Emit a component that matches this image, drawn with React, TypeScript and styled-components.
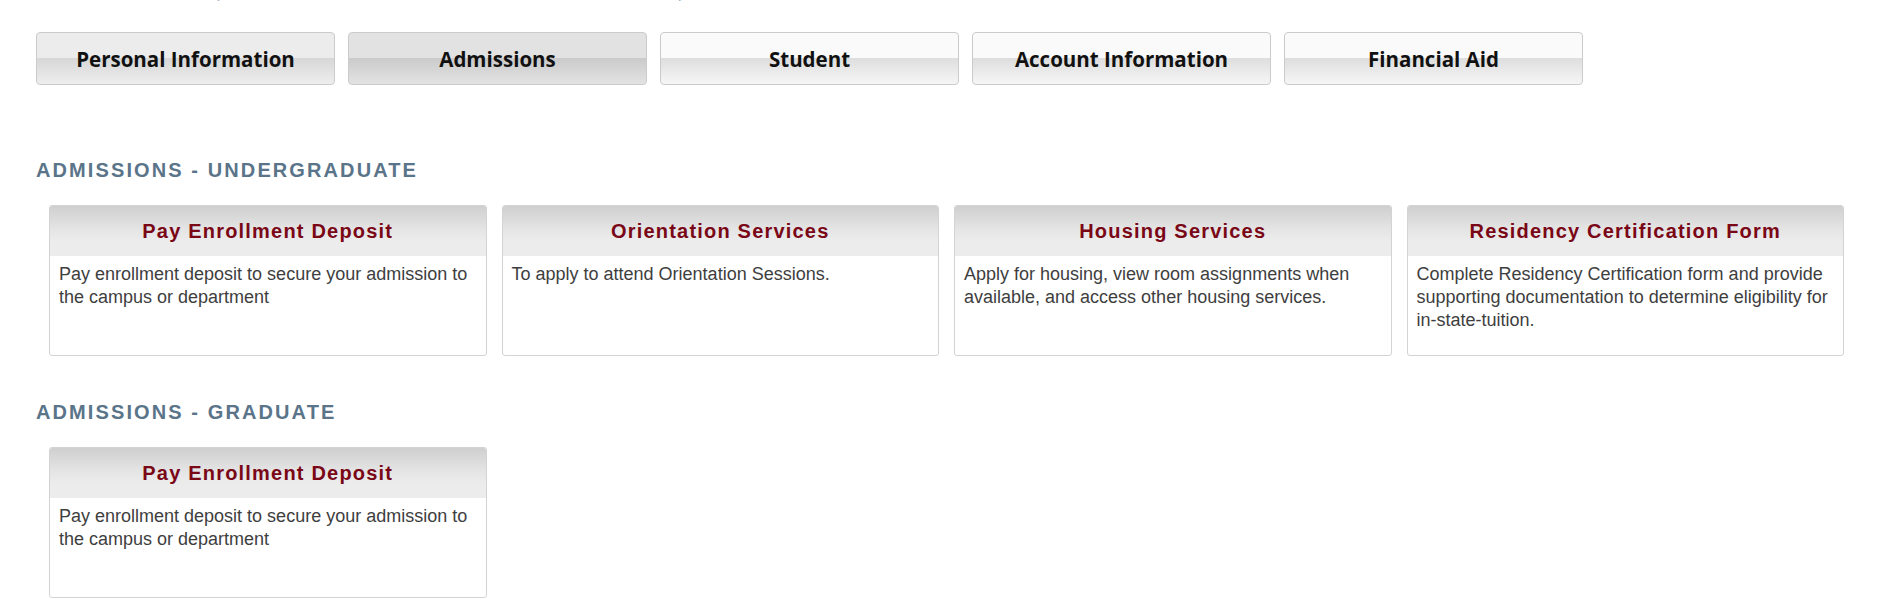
import styled, { createGlobalStyle } from "styled-components";

const GlobalStyle = createGlobalStyle`
    html, body {
        margin: 0;
        padding: 0;
        background: #fff;
    }
    body {
        font-family: "Liberation Sans", Arial, sans-serif;
        color: #333;
    }
`;

const Page = styled.div`
    padding: 0 40px 0 36px;
`;

// descenders of the page title that sits just above the visible area
const TitleTail = styled.div`
    height: 5px;
    overflow: hidden;
    display: flex;
    gap: 454px;
    padding-left: 181px;
    color: #4f729a;
    font-size: 26px;
    line-height: 5px;
`;

const Tail = styled.span`
    display: block;
    margin-top: -14px;
    font-style: italic;
`;

const TabBar = styled.nav`
    display: flex;
    gap: 13px;
    margin-top: 27px;
`;

type Look = "hover" | "active" | "idle";

const tabColors: Record<Look, [string, string, string]> = {
    hover: ["#ececec", "#d7d7d7", "#eeeeee"],
    active: ["#e2e2e2", "#cbcbcb", "#e3e3e3"],
    idle: ["#fafafa", "#dedede", "#f6f6f6"],
};

const Tab = styled.button<{ $look: Look }>`
    width: 299px;
    height: 53px;
    border: 1px solid #cbcbcb;
    border-radius: 4px;
    background: ${p => {
        const [top, mid, bottom] = tabColors[p.$look];
        return `linear-gradient(to bottom, ${top} 0%, ${top} 50%, ${mid} 50%, ${bottom} 100%)`;
    }};
    font-family: "Open Sans", sans-serif;
    font-weight: 700;
    font-size: 20.5px;
    color: #111;
    padding: 0;
    cursor: pointer;
`;

const SectionTitle = styled.h2`
    margin: 0;
    font-family: "Liberation Sans", Arial, sans-serif;
    font-size: 20px;
    line-height: 22px;
    font-weight: 700;
    letter-spacing: 2.1px;
    text-transform: uppercase;
    color: #5a7489;
`;

const Section = styled.section<{ $top: number }>`
    margin-top: ${p => p.$top}px;
`;

const CardGrid = styled.div`
    display: grid;
    grid-template-columns: repeat(4, 1fr);
    gap: 15px;
    margin: 24px 0 0 13px;
`;

const Card = styled.div`
    border: 1px solid #d3d3d3;
    border-radius: 3px;
    background: #fff;
    height: 149px;
    display: flex;
    flex-direction: column;
    overflow: hidden;
`;

const CardHead = styled.div`
    height: 50px;
    flex-shrink: 0;
    display: flex;
    align-items: center;
    justify-content: center;
    background: linear-gradient(to bottom, #cfcfcf 0%, #e4e4e4 45%, #ececec 70%, #ececec 100%);
    font-size: 20px;
    font-weight: 700;
    letter-spacing: 1.2px;
    color: #7a0716;
`;

const CardBody = styled.p`
    margin: 0;
    padding: 7px 10px 0 9px;
    font-size: 18px;
    line-height: 23px;
    color: #3e3e3e;
`;

const tabs: { label: string; look: Look }[] = [
    { label: "Personal Information", look: "hover" },
    { label: "Admissions", look: "active" },
    { label: "Student", look: "idle" },
    { label: "Account Information", look: "idle" },
    { label: "Financial Aid", look: "idle" },
];

interface ILink {
    title: string;
    text: string;
}

const deposit: ILink = {
    title: "Pay Enrollment Deposit",
    text: "Pay enrollment deposit to secure your admission to the campus or department",
};

const sections: { name: string; top: number; links: ILink[] }[] = [
    {
        name: "Admissions - Undergraduate",
        top: 74,
        links: [
            deposit,
            { title: "Orientation Services", text: "To apply to attend Orientation Sessions." },
            {
                title: "Housing Services",
                text: "Apply for housing, view room assignments when available, and access other housing services.",
            },
            {
                title: "Residency Certification Form",
                text: "Complete Residency Certification form and provide supporting documentation to determine eligibility for in-state-tuition.",
            },
        ],
    },
    { name: "Admissions - Graduate", top: 45, links: [deposit] },
];

function App() {
    return (
        <Page>
            <GlobalStyle />
            <TitleTail>
                <Tail>,</Tail>
                <Tail>,</Tail>
            </TitleTail>
            <TabBar>
                {tabs.map(tab => (
                    <Tab key={tab.label} $look={tab.look}>
                        {tab.label}
                    </Tab>
                ))}
            </TabBar>
            {sections.map(section => (
                <Section key={section.name} $top={section.top}>
                    <SectionTitle>{section.name}</SectionTitle>
                    <CardGrid>
                        {section.links.map(link => (
                            <Card key={link.title}>
                                <CardHead>{link.title}</CardHead>
                                <CardBody>{link.text}</CardBody>
                            </Card>
                        ))}
                    </CardGrid>
                </Section>
            ))}
        </Page>
    );
}

export default App;
